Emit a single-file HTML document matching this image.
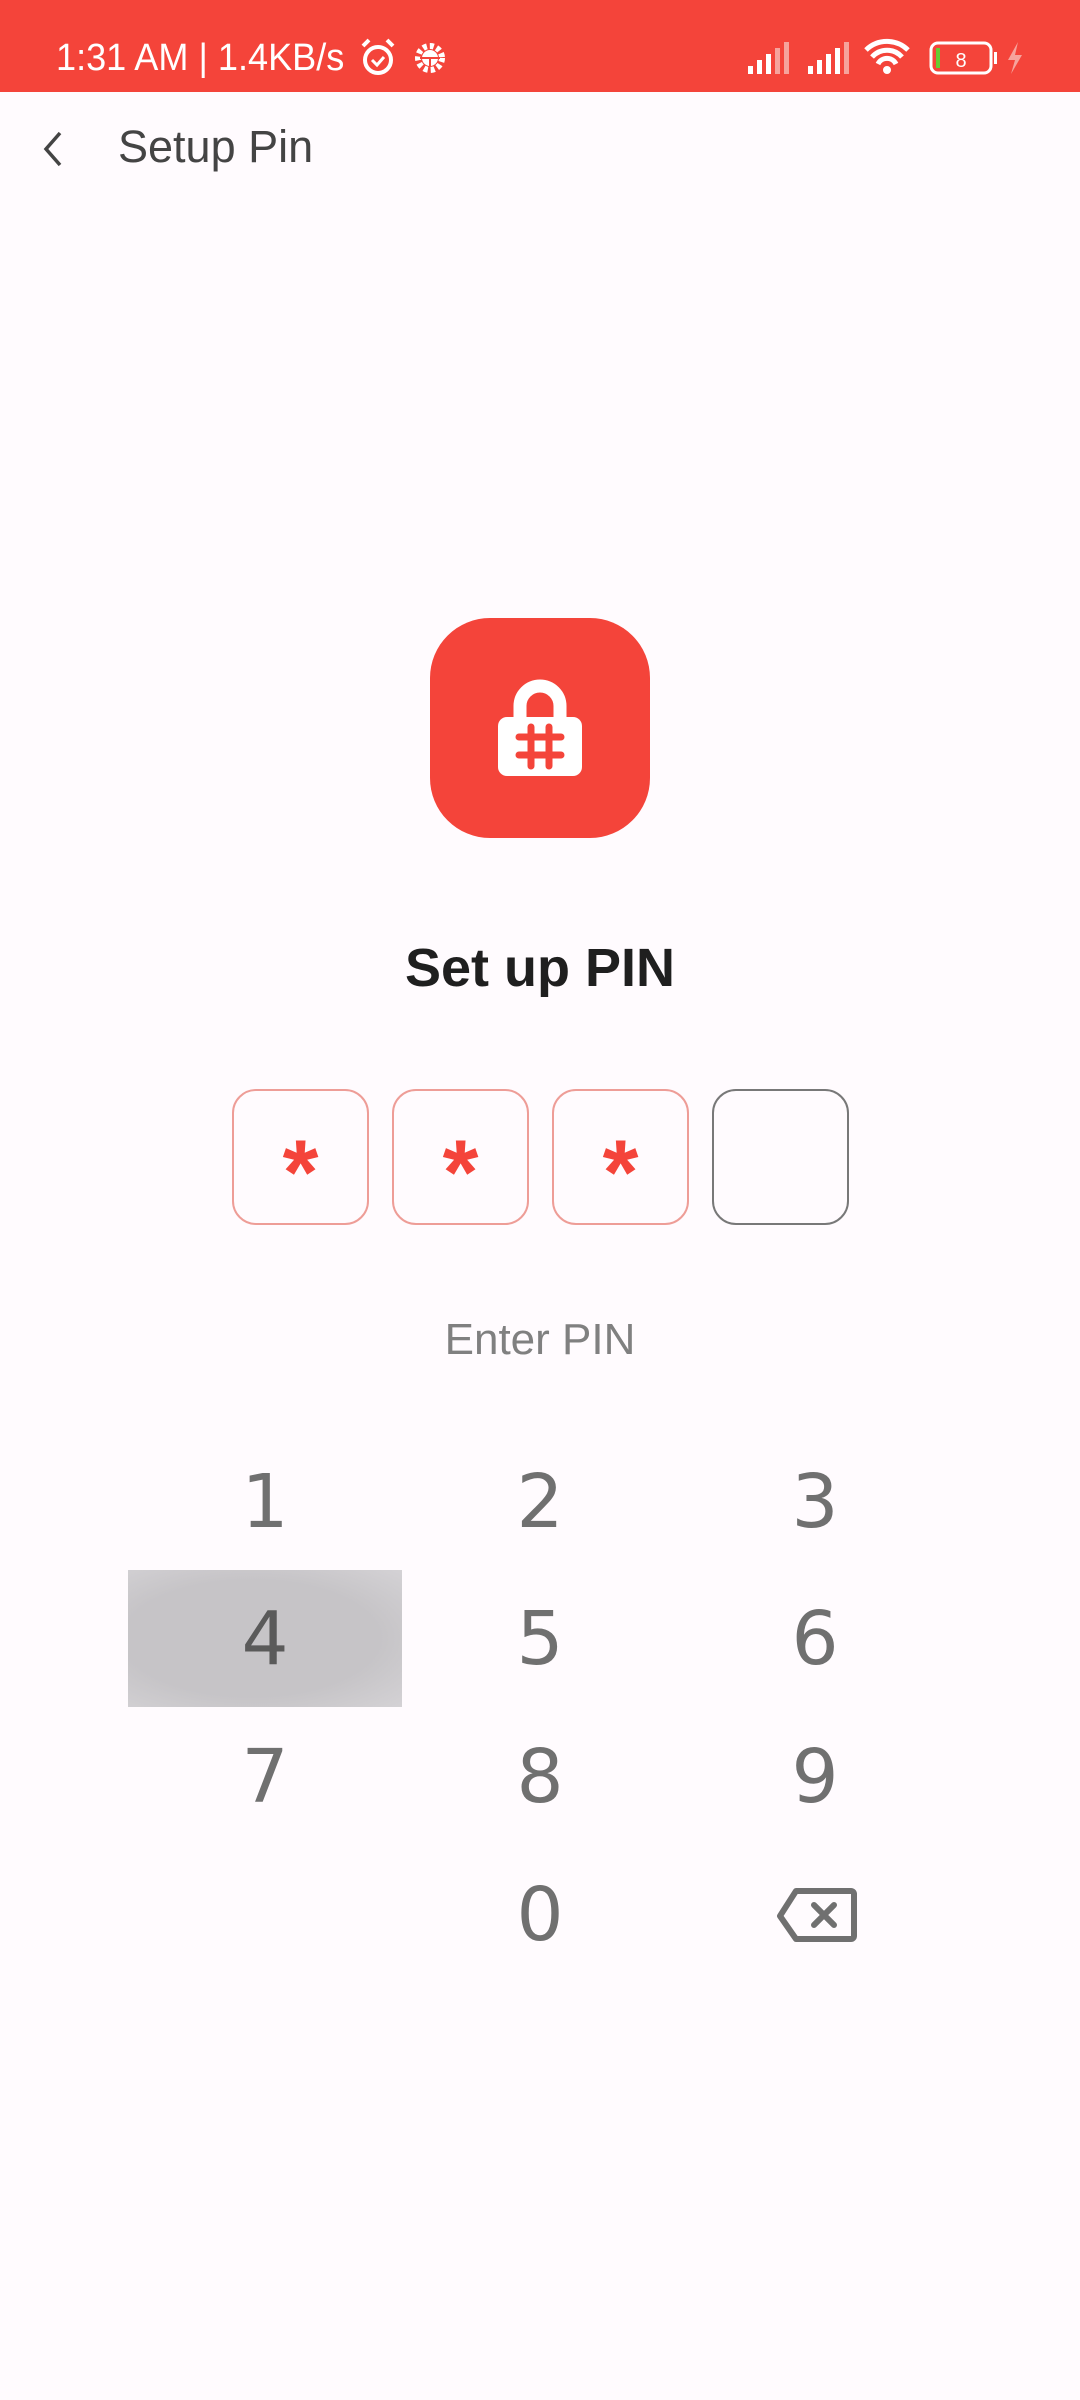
<!DOCTYPE html>
<html><head><meta charset="utf-8"><style>
*{margin:0;padding:0;box-sizing:border-box}
body{width:1080px;height:2400px;background:#fffbfe;position:relative;overflow:hidden;font-family:"Liberation Sans","DejaVu Sans",sans-serif}
.sb{position:absolute;left:0;top:0;width:1080px;height:92px;background:#f4443a}
.st{position:absolute;left:56px;top:35px;color:#fff;font-size:38px;line-height:46px;transform:scaleX(0.95);transform-origin:left}
.title{position:absolute;left:118px;top:121px;font-size:45px;color:#444;line-height:52px}
.abs{position:absolute}
.box{position:absolute;top:1089px;width:137px;height:136px;border-radius:24px;border:2.5px solid #ee9d97;text-align:center;color:#f4443a;font-weight:bold;font-size:92px;line-height:164px}
.key{position:absolute;width:274px;text-align:center;font-family:"DejaVu Sans",sans-serif;font-size:74px;color:#707070;line-height:100px}
</style></head><body>
<div class="sb"></div>
<div class="st">1:31 AM | 1.4KB/s</div>
<svg class="abs" style="left:358px;top:36px" width="96" height="44" viewBox="0 0 96 44">
 <circle cx="20" cy="24" r="13" fill="none" stroke="#fff" stroke-width="4"/>
 <path d="M14 24l5 5 7-8" fill="none" stroke="#fff" stroke-width="3"/>
 <path d="M5 10l6-6M35 10l-6-6" stroke="#fff" stroke-width="4"/>
 <circle cx="72" cy="22" r="12" fill="none" stroke="#fff" stroke-width="6" stroke-dasharray="4 3"/>
 <circle cx="72" cy="22" r="8" fill="#fff"/>
 <path d="M62 22h20M72 22v8" stroke="#f4443a" stroke-width="2"/>
</svg>
<svg class="abs" style="left:748px;top:38px" width="290" height="40" viewBox="0 0 290 40">
 <g fill="#fff"><rect x="0" y="28" width="5" height="8"/><rect x="9" y="22" width="5" height="14"/><rect x="18" y="16" width="5" height="20"/></g>
 <g fill="#f6a39c"><rect x="27" y="10" width="5" height="26"/><rect x="36" y="4" width="5" height="32"/></g>
 <g fill="#fff"><rect x="60" y="28" width="5" height="8"/><rect x="69" y="22" width="5" height="14"/><rect x="78" y="16" width="5" height="20"/><rect x="87" y="10" width="5" height="26"/></g>
 <rect x="96" y="4" width="5" height="32" fill="#f6a39c"/>
 <path d="M118 12a30 30 0 0 1 42 0M124 19a20 20 0 0 1 30 0M130 26a10 10 0 0 1 18 0" fill="none" stroke="#fff" stroke-width="5"/>
 <circle cx="139" cy="32" r="4" fill="#fff"/>
 <rect x="183" y="5" width="60" height="30" rx="7" fill="none" stroke="#fff" stroke-width="3"/>
 <rect x="188" y="10" width="4" height="20" fill="#6c3"/>
 <rect x="246" y="14" width="3" height="12" fill="#fff"/>
 <text x="213" y="29" font-size="20" fill="#fff" text-anchor="middle" font-family="Liberation Sans">8</text>
 <path d="M270 4l-10 18h7l-4 14 11-19h-7z" fill="#f6a39c"/>
</svg>
<svg class="abs" style="left:40px;top:130px" width="26" height="38" viewBox="0 0 26 38"><path d="M20 3L6 19l14 16" fill="none" stroke="#444" stroke-width="3.5"/></svg>
<div class="title">Setup Pin</div>
<div class="abs" style="left:430px;top:618px;width:220px;height:220px;border-radius:60px;background:#f4443a"></div>
<svg class="abs" style="left:430px;top:618px" width="220" height="220" viewBox="430 618 220 220">
 <path d="M520 718v-12a20 20 0 0 1 40 0v12" fill="none" stroke="#fff" stroke-width="13"/>
 <rect x="498" y="717" width="84" height="59" rx="9" fill="#fff"/>
 <path d="M531 727v39M549 727v39M519 737h42M519 755h42" stroke="#f4443a" stroke-width="7" stroke-linecap="round"/>
</svg>
<div class="abs" style="left:0;width:1080px;top:936px;text-align:center;font-size:54px;font-weight:bold;color:#1f1f1f;line-height:64px">Set up PIN</div>
<div class="box" style="left:232px">*</div>
<div class="box" style="left:392px">*</div>
<div class="box" style="left:552px">*</div>
<div class="box" style="left:712px;border-color:#787878"></div>
<div class="abs" style="left:0;width:1080px;top:1314px;text-align:center;font-size:44px;color:#808080;line-height:52px">Enter PIN</div>
<div class="abs" style="left:128px;top:1570px;width:274px;height:137px;background:radial-gradient(ellipse at 45% 50%,#c6c4c7 60%,#d4d2d5 100%)"></div>
<div class="key" style="left:128px;top:1452px">1</div>
<div class="key" style="left:403px;top:1452px">2</div>
<div class="key" style="left:678px;top:1452px">3</div>
<div class="key" style="left:128px;top:1589px;color:#5a5a5a">4</div>
<div class="key" style="left:403px;top:1589px">5</div>
<div class="key" style="left:678px;top:1589px">6</div>
<div class="key" style="left:128px;top:1727px">7</div>
<div class="key" style="left:403px;top:1727px">8</div>
<div class="key" style="left:678px;top:1727px">9</div>
<div class="key" style="left:403px;top:1865px">0</div>
<svg class="abs" style="left:776px;top:1886px" width="82" height="58" viewBox="0 0 82 58">
 <path d="M20 5h55a3 3 0 0 1 3 3v42a3 3 0 0 1-3 3H20L4 30z" fill="none" stroke="#707070" stroke-width="6" stroke-linejoin="round"/>
 <path d="M38 19l20 20M58 19L38 39" stroke="#707070" stroke-width="6" stroke-linecap="round"/>
</svg>
</body></html>
